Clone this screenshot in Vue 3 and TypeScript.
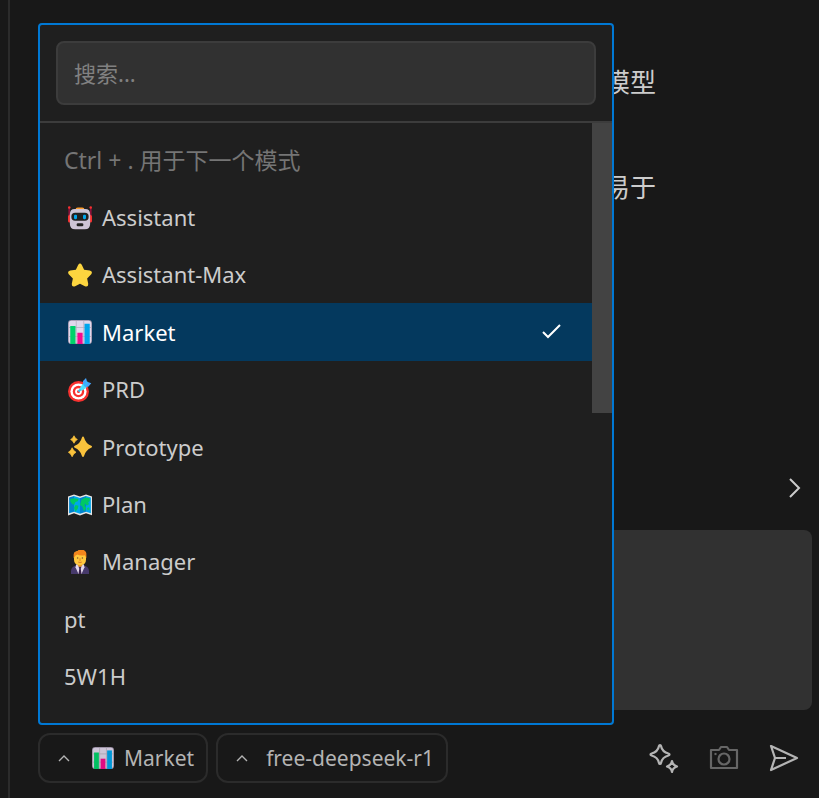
<script setup lang="ts">
import { ref } from 'vue'

interface Mode {
  name: string
  icon?: 'robot' | 'star' | 'chart' | 'target' | 'sparkles' | 'map' | 'manager'
}

const modes: Mode[] = [
  { name: 'Assistant', icon: 'robot' },
  { name: 'Assistant-Max', icon: 'star' },
  { name: 'Market', icon: 'chart' },
  { name: 'PRD', icon: 'target' },
  { name: 'Prototype', icon: 'sparkles' },
  { name: 'Plan', icon: 'map' },
  { name: 'Manager', icon: 'manager' },
  { name: 'pt' },
  { name: '5W1H' },
]

const selected = ref('Market')
const query = ref('')
const draft = ref('')
</script>

<template>
  <main class="panel">
    <!-- Shared icon artwork -->
    <svg class="defs" aria-hidden="true">
      <symbol id="robot" viewBox="0 0 32 32">
        <path d="M1.500 2v18M30.500 2v18" stroke="#ca0b4a" stroke-width="1.400" />
        <circle cx="1.700" cy="2" r="1.700" fill="#f8312f" /><circle cx="30.300" cy="2" r="1.700" fill="#f8312f" />
        <path d="M3 12H2a2 2 0 0 0-2 2v6a2 2 0 0 0 2 2h1zM29 12h1a2 2 0 0 1 2 2v6a2 2 0 0 1-2 2h-1z" fill="#f8312f" />
        <path d="M10 5q0-3 3-3h6q3 0 3 3z" fill="#ff9f2e" />
        <path d="M9 4h14q6.500 0 6.500 7V24q0 7-7 7h-13q-7 0-7-7V11q0-7 6.500-7z" fill="#cdc4d6" />
        <rect x="4.500" y="9" width="23" height="10.500" rx="5" fill="#212121" />
        <rect x="8" y="11.500" width="4" height="6" rx="1.500" fill="#00a6ed" /><rect x="20" y="11.500" width="4" height="6" rx="1.500" fill="#00a6ed" />
        <rect x="11.500" y="23" width="9" height="4" rx="1.800" fill="#212121" />
      </symbol>
      <symbol id="star" viewBox="0 0 32 32">
        <path d="M13.500 2.500Q16-1 18.500 2.500L21.500 9l7.500 1q4.500 1 2 5l-5.500 5.500 1.500 7.500q0 4.500-4.500 3L16 27.500 9.500 31Q5 32.500 5 28l1.500-7.500L1 15q-2.500-4 2-5l7.500-1z" fill="#fcd53f" />
      </symbol>
      <symbol id="chart" viewBox="0 0 32 32">
        <rect width="32" height="32" rx="4.500" fill="#998ea4" />
        <rect x="1" y="1" width="30" height="30" rx="3.500" fill="#e1d8ec" />
        <path d="M1 10h30M1 22h30M11 1v30M21 1v30" stroke="#b4acbc" stroke-width="1" />
        <path d="M3 8h7v24H3z" fill="#00d26a" /><path d="M12.500 17h7v15h-7z" fill="#f70a8d" /><path d="M22 5h7v27h-7z" fill="#00a6ed" />
      </symbol>
      <symbol id="target" viewBox="0 0 32 32">
        <circle cx="14" cy="18" r="14" fill="#f8312f" /><circle cx="14" cy="18" r="10.800" fill="#fff" />
        <circle cx="14" cy="18" r="7.600" fill="#f8312f" /><circle cx="14" cy="18" r="4.500" fill="#fff" /><circle cx="14" cy="18" r="2" fill="#f8312f" />
        <path d="m14 18 9-9" stroke="#26c9fc" stroke-width="2.500" />
        <path d="m15.500 14 4-6 3-1 3 3-1 3-6 4z" fill="#50e2ff" />
        <path d="M20 8V4l4-4 1.500 5 5.500 2-4 4.500h-4.500z" fill="#46a4fb" />
        <path d="m21 11 5-6" stroke="#26c9fc" stroke-width="1.500" />
      </symbol>
      <symbol id="sparkles" viewBox="0 0 32 32">
        <path d="M20 2q1 0 1.400 1.200 2.200 8.300 9.600 11 1.200.6 1 1.600-.1.900-1 1.300-7.300 2.900-9.600 10.900-.4 1.200-1.400 1.200t-1.400-1.200q-2.300-8-9.600-10.900-1-.4-1-1.300t1-1.600q7.400-2.700 9.600-11Q19 2 20 2z" fill="#f9c23c" />
        <path d="M8 1q1.200 3.700 4.500 5Q9.200 7.500 8 11 6.800 7.500 3.500 6 6.800 4.700 8 1zM5.500 17q1.500 4.300 5.200 6-3.700 1.700-5.200 6Q4 24.700.5 23 4 21.300 5.500 17z" fill="#f9c23c" stroke="#f9c23c" stroke-linejoin="round" />
      </symbol>
      <symbol id="map" viewBox="0 0 32 32">
        <path d="M0 4.500 8 2l8 2.500L24 2l8 2.500v25L24 27l-8 3-8-3-8 3z" fill="#e6e6e6" />
        <path d="m1.500 6 6.500-2v21L1.500 27zM16 6.500 24 4v21l-8 2.500z" fill="#0084ce" />
        <path d="m8 4 8 2.500v21L8 25zM24 4l6.500 2v21L24 25z" fill="#00a6ed" />
        <path d="m3 8 5-1 6 1-1 3-3 1-2 4-3-2-2-3zM10 16l4 1-1 4-3 4-2-5zM18 9l5-3 6 1v4l-2 1 1 3-3 2-2-3-1 3 2 2-1 4-2 1-2-6-3-2z" fill="#00c864" />
        <path d="M25 20l3-1 1 3-3 1z" fill="#00d26a" />
      </symbol>
      <symbol id="manager" viewBox="0 0 32 32">
        <path d="M4 32v-4q0-6 8-8h8q8 2 8 8v4z" fill="#46396b" />
        <path d="m11 19-1 4 4 9h4l4-9-1-4z" fill="#e1d8ec" />
        <path d="m14 22 2-1 2 1-1 3 1 7h-4l1-7z" fill="#38204a" />
        <path d="M13 14h6v7l-3 2-3-2z" fill="#e99b28" />
        <path d="M8 6q0-5 8-5t8 5v7q0 7-8 7t-8-7z" fill="#ffc83d" />
        <path d="M7.500 11V6Q8 2 12 2l2-2h7q4 2 3.500 7v4l-2-4q-7 1-10-1-3 1-5 5z" fill="#f3851c" />
        <circle cx="12.800" cy="10.500" r="1" fill="#795532" /><circle cx="19.200" cy="10.500" r="1" fill="#795532" />
        <path d="M16 11v4M13.500 16q2.500 2 5 0" fill="none" stroke="#d3682a" stroke-width="1" />
      </symbol>
    </svg>

    <section class="messages">
      <p>模型</p>
      <p>易于</p>
    </section>

    <button class="expand" aria-label="展开">
      <svg width="16" height="24" viewBox="0 0 16 24"><path d="m3 3 9 9-9 9" /></svg>
    </button>

    <textarea v-model="draft" class="draft" aria-label="消息"></textarea>

    <footer class="toolbar">
      <button class="chip" aria-haspopup="listbox" aria-expanded="true">
        <svg class="caret" width="12" height="8" viewBox="0 0 12 8"><path d="m1 7 5-5 5 5" /></svg>
        <svg class="chip-icon"><use href="#chart" /></svg>
        <span>{{ selected }}</span>
      </button>
      <button class="chip" aria-haspopup="listbox">
        <svg class="caret" width="12" height="8" viewBox="0 0 12 8"><path d="m1 7 5-5 5 5" /></svg>
        <span>free-deepseek-r1</span>
      </button>
      <div class="actions">
        <button aria-label="增强">
          <svg viewBox="0 0 32 32">
            <path d="M12 3q.8 0 1 1 1.200 6 7.500 7.500 1 .2 1 1t-1 1Q14.200 15 13 21q-.2 1-1 1t-1-1Q9.800 15 3.500 13.500q-1-.2-1-1t1-1Q9.800 10 11 4q.2-1 1-1z" />
            <path d="M24 19q.7 4.300 5 5.500-4.300 1.200-5 5.500-.7-4.300-5-5.500 4.300-1.200 5-5.500z" />
          </svg>
        </button>
        <button class="muted" aria-label="截图">
          <svg viewBox="0 0 32 32"><path d="M3 8h8l2-3h6l2 3h8v18H3z" /><circle cx="16" cy="17" r="5.500" /><path d="M6.500 12h2" /></svg>
        </button>
        <button aria-label="发送">
          <svg viewBox="0 0 32 32"><path d="m3 4 26 12L3 28l4-12zM7 16h11" /></svg>
        </button>
      </div>
    </footer>

    <div class="menu">
      <div class="search">
        <input v-model="query" type="text" placeholder="搜索..." aria-label="搜索" />
      </div>
      <div class="body">
        <div class="list" role="listbox" aria-label="模式">
          <div class="hint">Ctrl + . 用于下一个模式</div>
          <button
            v-for="mode in modes"
            :key="mode.name"
            class="option"
            :class="{ active: mode.name === selected }"
            role="option"
            :aria-selected="mode.name === selected"
            @click="selected = mode.name"
          >
            <svg v-if="mode.icon" class="emoji"><use :href="'#' + mode.icon" /></svg>
            <span>{{ mode.name }}</span>
            <svg v-if="mode.name === selected" class="check" viewBox="0 0 20 20"><path d="m1 10 5 5L18 3" /></svg>
          </button>
        </div>
        <div class="track"><div class="thumb"></div></div>
      </div>
    </div>
  </main>
</template>

<style>
body {
  background: #181818;
}
</style>

<style scoped>
* {
  box-sizing: border-box;
}
.panel {
  position: relative;
  display: flex;
  flex-direction: column;
  height: 100vh;
  margin-left: 8px;
  padding: 0 7px 15px 28px;
  border-left: 2px solid #2b2b2b;
  overflow: hidden;
  color: #ccc;
  font: 22px/30px "Noto Sans", "Noto Sans CJK SC", sans-serif;
}
button,
input,
textarea {
  margin: 0;
  font: inherit;
  color: inherit;
}
button {
  padding: 0;
  border: 0;
  background: none;
}
svg {
  display: block;
  flex: none;
}
.defs {
  position: absolute;
  width: 0;
  height: 0;
}
.messages {
  display: flex;
  flex: 1;
  flex-direction: column;
  gap: 65px;
  padding: 62px 0 0 566px;
  font-size: 26px;
  line-height: 40px;
}
.messages p {
  margin: 0;
}
.expand {
  align-self: flex-end;
  margin: 0 9px 30px 0;
}
.expand path,
.caret path,
.check path,
.actions svg {
  fill: none;
  stroke: currentColor;
  stroke-width: 2;
}
.draft {
  flex: none;
  width: 100%;
  height: 180px;
  padding: 16px;
  border: 0;
  border-radius: 8px;
  background: #313131;
  resize: none;
}
.toolbar {
  display: flex;
  align-items: center;
  gap: 8px;
  margin-top: 23px;
  color: #b4b4b4;
}
.chip {
  display: flex;
  align-items: center;
  height: 50px;
  padding: 0 12px 0 18px;
  border: 2px solid #2b2b2b;
  border-radius: 12px;
  font-size: 21px;
  white-space: nowrap;
}
.caret {
  margin-right: 18px;
}
.caret path {
  stroke-width: 1.4;
}
.chip-icon {
  width: 22px;
  height: 22px;
  margin: 0 10px 0 4px;
  opacity: 0.9;
}
.actions {
  display: flex;
  gap: 28px;
  margin-left: auto;
  padding-right: 12px;
}
.actions svg {
  width: 32px;
  height: 32px;
  stroke-width: 2.2;
  stroke-linejoin: round;
}
.muted {
  opacity: 0.5;
}
.menu {
  position: absolute;
  top: 23px;
  bottom: 73px;
  left: 28px;
  display: flex;
  flex-direction: column;
  width: 576px;
  max-width: calc(100% - 36px);
  border: 2px solid #0078d4;
  border-radius: 4px;
  background: #1f1f1f;
}
.search {
  padding: 16px;
  border-bottom: 2px solid #3c3c3c;
}
.search input {
  display: block;
  width: 100%;
  height: 64px;
  padding: 0 16px;
  border: 2px solid #3c3c3c;
  border-radius: 8px;
  outline: 0;
  background: #313131;
}
.search input::placeholder {
  color: #818181;
  opacity: 1;
}
.body {
  display: flex;
  flex: 1;
  min-height: 0;
}
.list {
  display: grid;
  flex: 1;
  grid-auto-rows: 1fr;
  padding: 8px 0 18px;
}
.hint {
  display: flex;
  align-items: center;
  padding-left: 24px;
  color: #757575;
  font-size: 23px;
}
.option {
  display: flex;
  align-items: center;
  padding: 0 30px 0 24px;
  text-align: left;
}
.option.active {
  background: #04395e;
  color: #fff;
}
.emoji {
  width: 24px;
  height: 24px;
  margin: 1px 10px 0 4px;
}
.check {
  width: 20px;
  height: 20px;
  margin-left: auto;
}
.track {
  width: 20px;
}
.thumb {
  height: 290px;
  background: #434343;
}
</style>
